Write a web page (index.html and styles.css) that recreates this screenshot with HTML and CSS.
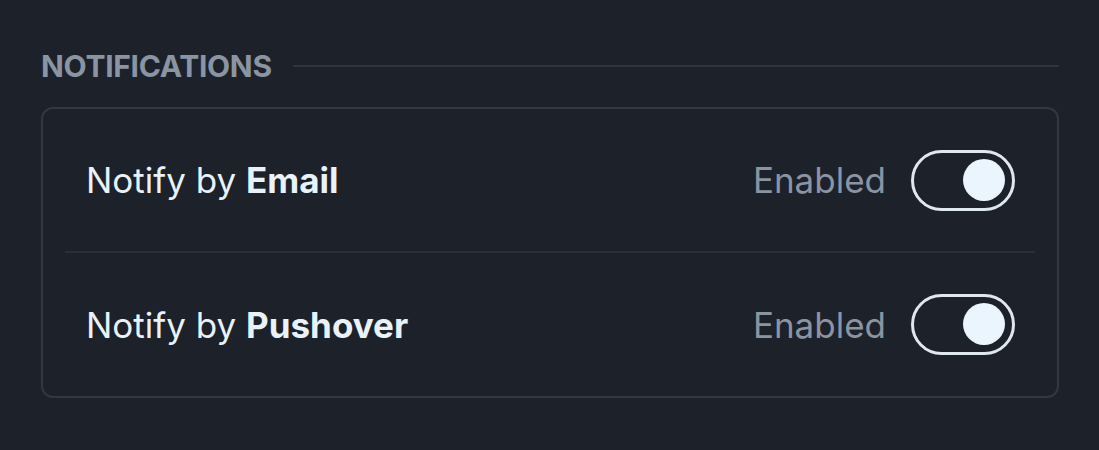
FILE: index.html
```html
<!DOCTYPE html>
<html lang="en">
<head>
  <meta charset="UTF-8">
  <meta name="viewport" content="width=device-width, initial-scale=1.0">
  <title>Notifications</title>
  <link rel="stylesheet" href="styles.css">
</head>
<body>
  <div class="section">
    <div class="section-header">
      <h2>Notifications</h2>
      <span class="section-line"></span>
    </div>
    <div class="card">
      <div class="setting-row">
        <span class="setting-label">Notify by <b>Email</b></span>
        <div class="setting-control">
          <span class="status">Enabled</span>
          <button class="toggle on" type="button"><span class="knob"></span></button>
        </div>
      </div>
      <div class="setting-row">
        <span class="setting-label">Notify by <b>Pushover</b></span>
        <div class="setting-control">
          <span class="status">Enabled</span>
          <button class="toggle on" type="button"><span class="knob"></span></button>
        </div>
      </div>
    </div>
  </div>
</body>
</html>
```

FILE: styles.css
```css
body {
  margin: 0;
  background: #1d2129;
  font-family: Inter, "Noto Sans", sans-serif;
  color: #e8f2fb;
}
.section {
  padding: 41px 40px 0 41px;
}
.section-header {
  display: flex;
  align-items: center;
  height: 50px;
  gap: 21px;
  margin-bottom: 16px;
}
.section-header h2 {
  margin: 0;
  font-size: 30px;
  font-weight: 700;
  text-transform: uppercase;
  color: #8a94a2;
  letter-spacing: -0.3px;
}
.section-line {
  flex: 1;
  height: 2px;
  background: #2f353f;
}
.card {
  border: 2px solid #323843;
  border-radius: 12px;
  padding: 0 22px;
}
.setting-row {
  display: flex;
  align-items: center;
  justify-content: space-between;
  height: 142px;
  padding: 0 20px 0 21px;
}
.setting-row + .setting-row {
  border-top: 2px solid #2a2f38;
  height: 143px;
}
.setting-label {
  font-size: 35px;
}
.setting-label b {
  font-weight: 700;
}
.setting-control {
  display: flex;
  align-items: center;
  gap: 25px;
}
.status {
  font-size: 35px;
  color: #8a94a2;
}
.toggle {
  position: relative;
  width: 104px;
  height: 61px;
  border: 3px solid #dfe8f0;
  border-radius: 31px;
  background: transparent;
  padding: 0;
  cursor: pointer;
}
.toggle .knob {
  position: absolute;
  top: 6px;
  left: 7px;
  width: 42px;
  height: 42px;
  border-radius: 50%;
  background: #eaf5fd;
}
.toggle.on .knob {
  left: auto;
  right: 7px;
}
```
